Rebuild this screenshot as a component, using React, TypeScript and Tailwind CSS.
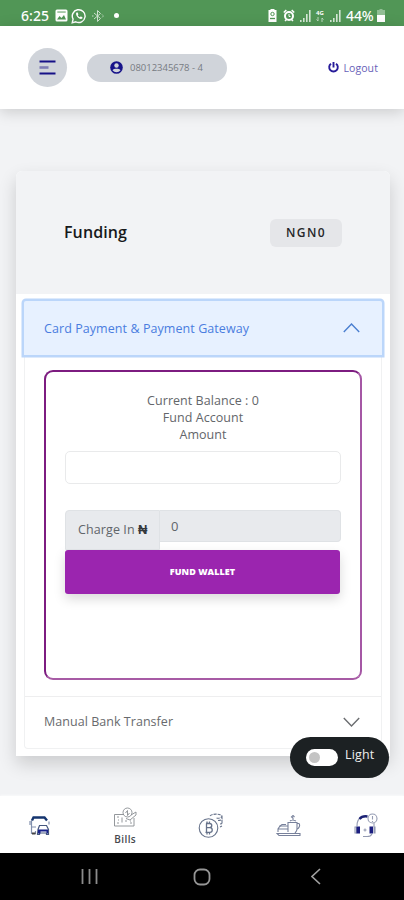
import React from "react";

function StatusBar() {
  return (
    <div className="flex h-[26px] items-center justify-between bg-[#519656] pl-[21px] pr-[19px] pt-[5px] text-white">
      <div className="flex items-center">
        <span className="w-[28px] whitespace-nowrap font-['Noto_Sans','Open_Sans',sans-serif] text-[14px] font-medium leading-none tracking-[0.1px]">6:25</span>
        <svg className="ml-[6px]" width="13" height="13" viewBox="0 0 13 13">
          <rect x="0.5" y="0.5" width="12" height="12" rx="1.5" fill="#fff" />
          <path d="M2 10.5 4.5 7 6.500 9 9 6 11 10.5Z" fill="#519656" />
          <rect x="2.3" y="2.3" width="8.4" height="1.5" fill="#8fbb92" />
        </svg>
        <svg className="ml-[3px]" width="16" height="16" viewBox="0 0 16 16">
          <path d="M1.2 14.8 2.1 11.2A6.4 6.4 0 1 1 4.8 13.8Z" fill="none" stroke="#fff" strokeWidth="1.4" />
          <path d="M5.5 4.5c-2 2.500 3.300 8.200 6 5.800l-.2-1.200-1.700-.7-.9.8C7.500 8.700 7 8 6.800 7.200l.6-.8-.7-1.900Z" fill="#fff" />
        </svg>
        <svg className="ml-[5px]" width="12" height="14" viewBox="0 0 12 14" fill="none" stroke="#cde1ce" strokeWidth="1">
          <path d="M2 4 8.5 9.5 5.5 12.5V1.5L8.5 4.5 2 10" />
          <path d="M0 7h2M10 5.5 11.5 7 10 8.5" strokeDasharray="1.5 1" />
        </svg>
        <span className="ml-[10px] h-[5px] w-[5px] rounded-full bg-white" />
      </div>
      <div className="flex items-center">
        <svg width="9" height="13" viewBox="0 0 9 13">
          <path d="M2.5 0h4v1H8.5v12h-8V1h2Z" fill="#fff" />
          <circle cx="4.5" cy="5" r="1.7" fill="none" stroke="#519656" />
          <path d="M2 9.5h5" stroke="#519656" strokeWidth="1.3" />
        </svg>
        <svg className="ml-[6px]" width="12" height="13" viewBox="0 0 12 13" fill="none" stroke="#fff">
          <circle cx="6" cy="7" r="4" strokeWidth="2" />
          <path d="M.8 3.5 3.3 1M11.2 3.5 8.7 1M2 12l1.5-1.5M10 12l-1.5-1.5" strokeWidth="1.5" />
          <path d="M6 5v2.5h1.5" />
        </svg>
        <Signal className="ml-[5px]" />
        <span className="ml-[4px] flex w-[10px] flex-col items-center font-['Noto_Sans',sans-serif] text-[6px] font-bold leading-[7px]">
          <span>4G</span>
          <svg width="8" height="5" viewBox="0 0 8 5" fill="none" stroke="#bcd8bd"><path d="M2 0v4L.5 2.5M6 5V1l1.5 1.5" /></svg>
        </span>
        <Signal className="ml-[5px]" />
        <span className="ml-[5px] w-[30px] whitespace-nowrap font-['Noto_Sans',sans-serif] text-[14px] font-medium leading-none tracking-[-0.1px]">44%</span>
        <svg className="ml-[1px]" width="8" height="13" viewBox="0 0 8 13">
          <path d="M2.5 0h3v1H8v6H0V1h2.5Z" fill="#91be94" />
          <path d="M0 6h8v7H0Z" fill="#fff" />
        </svg>
      </div>
    </div>
  );
}

function Signal({ className }: { className: string }) {
  return (
    <svg className={className} width="11" height="12" viewBox="0 0 11 12" fill="#d5e6d6">
      <path d="M0 10h1.600v2H0ZM3 8h1.600v4H3ZM6 4h1.600v8H6ZM9 0h1.600v12H9Z" />
    </svg>
  );
}

function Header() {
  return (
    <header className="relative flex h-[83px] items-center bg-white pl-[28px] pr-[26px] shadow-[0_3px_14px_rgba(0,0,0,0.17)]">
      <button className="flex h-[39px] w-[39px] items-center justify-center rounded-full bg-[#d0d4da]">
        <svg width="17" height="15" viewBox="0 0 17 15">
          <path d="M.5 1.5h16M.5 13.5h16" stroke="#161187" strokeWidth="2.200" />
          <path d="M.5 7.5h9" stroke="#7d7cb4" strokeWidth="2.6" />
        </svg>
      </button>
      <div className="ml-[20px] flex h-[28px] w-[140px] items-center rounded-full bg-[#d0d4da] pl-[23px]">
        <svg width="13" height="13" viewBox="0 0 13 13">
          <circle cx="6.5" cy="6.5" r="6.3" fill="#17138a" />
          <circle cx="6.5" cy="4.5" r="2.2" fill="#d0d4da" />
          <path d="M2.5 9.2C4 7.3 9 7.3 10.5 9.2 8.5 11.8 4.5 11.8 2.5 9.2Z" fill="#d0d4da" />
        </svg>
        <span className="relative top-px ml-[7px] whitespace-nowrap text-[9.5px] tracking-[-0.02px] text-[#777b82]">08012345678 - 4</span>
      </div>
      <div className="ml-auto flex items-center">
        <svg width="11" height="11" viewBox="0 0 11 11" fill="none" stroke="#271c9a" strokeWidth="1.9">
          <path d="M3 1.7a4.3 4.3 0 1 0 5 0M5.5 0v5.5" />
        </svg>
        <span className="relative top-px ml-[4px] whitespace-nowrap text-[10.5px] tracking-[0.1px] text-[#6861b8]">Logout</span>
      </div>
    </header>
  );
}

function Chevron({ up, color }: { up?: boolean; color: string }) {
  return (
    <svg width="17" height="10" viewBox="0 0 17 10" fill="none" stroke={color} strokeWidth="1.4">
      <path d={up ? "M.8 9 8.5 1l7.7 8" : "M.8 1 8.5 9l7.7-8"} />
    </svg>
  );
}

function FundingForm() {
  return (
    <div className="mx-[20px] mt-[14px] h-[310px] rounded-[9px] border-2 border-[#7d1c80] border-b-[#a75ba5] border-r-[#a557a5] px-[19px] pt-[20px]">
      <div className="text-center text-[12.5px] leading-[17px] tracking-[0.05px] text-[#63666a]">
        <p>Current Balance : 0</p>
        <p>Fund Account</p>
        <p>Amount</p>
      </div>
      <div className="mt-[8px] h-[33px] rounded-[5px] border border-[#e9eaeb] bg-white" />
      <div className="mt-[26px] flex h-[40px] items-start">
        <div className="flex h-[40px] w-[95px] items-center whitespace-nowrap rounded-tl-[4px] border border-[#dfe2e5] bg-[#e8eaed] pl-[12px] text-[12.5px] tracking-[0.1px] text-[#60656a]">
          Charge In&nbsp;<span className="font-['Liberation_Sans',sans-serif] text-[13px] font-bold text-[#34383b]">₦</span>
        </div>
        <div className="h-[32px] flex-1 rounded-r-[4px] border border-l-0 border-[#dfe2e5] bg-[#e8eaed] pl-[11px] text-[13px] leading-[30px] text-[#60656a]">0</div>
      </div>
      <button className="block h-[44px] w-[275px] rounded-[3px] bg-[#9b25af] text-center text-[9px] font-extrabold tracking-[0.05px] text-white shadow-[0_5px_12px_rgba(0,0,0,0.15)]">FUND WALLET</button>
    </div>
  );
}

function FundingCard() {
  return (
    <section className="ml-[16px] mr-[14px] h-[585px] rounded-t-[6px] bg-white shadow-[0_8px_18px_rgba(0,0,0,0.16)]">
      <div className="flex h-[123px] items-center justify-between rounded-t-[6px] bg-[#f2f3f5] px-[48px]">
        <h1 className="relative -top-px text-[16px] font-semibold tracking-[0.1px] text-[#17191b]">Funding</h1>
        <span className="flex h-[28px] w-[72px] items-center justify-center rounded-[6px] bg-[#e5e6e9] text-[12px] font-semibold tracking-[1.4px] text-[#25272a]">NGN0</span>
      </div>
      <div className="mx-[8px] mt-[7px] h-[448px] rounded-[4px] border border-t-0 border-[#f0f1f2]">
        <div className="-mx-px flex h-[54px] items-center justify-between rounded-t-[2px] bg-[#e7f1ff] pl-[20px] pr-[22px] shadow-[0_0_0_2.5px_#bbd6fa]">
          <span className="relative top-px whitespace-nowrap text-[12.5px] tracking-[0.07px] text-[#4a7de0]">Card Payment &amp; Payment Gateway</span>
          <Chevron up color="#4a7fd0" />
        </div>
        <div className="-mx-px pt-px"><FundingForm /></div>
        <div className="mt-[16px] flex h-[51px] items-center justify-between border-t border-[#eeeeef] pl-[19px] pr-[21px]">
          <span className="whitespace-nowrap text-[12.5px] tracking-[0.04px] text-[#686a6d]">Manual Bank Transfer</span>
          <Chevron color="#6b6d70" />
        </div>
      </div>
    </section>
  );
}

function ThemeSwitch() {
  return (
    <button className="absolute left-[290px] top-[628px] flex h-[41px] w-[99px] items-center rounded-full bg-[#1c2123] pl-[16px]">
      <span className="flex h-[17px] w-[32px] items-center rounded-full bg-white pl-[3px]">
        <span className="h-[11px] w-[11px] rounded-full bg-[#c4c4c4]" />
      </span>
      <span className="relative -top-[2px] ml-[7px] text-[12.5px] tracking-[0.15px] text-[#eeeeee]">Light</span>
    </button>
  );
}

function BottomNav() {
  return (
    <nav className="grid h-[57px] grid-cols-5 bg-white pt-px shadow-[0_-1px_2px_rgba(255,255,255,0.6)]">
      <div className="flex justify-center pt-[19px]">
        <svg width="22" height="20" viewBox="0 0 22 20" fill="none" stroke="#1d356b" strokeWidth="1.2">
          <path d="M3 4.5 4.5 1.5h11L18 4.5" strokeWidth="2.4" stroke="#15356f" />
          <path d="M2.5 4v13.5h4V15M3 11h4M1 5v4M20 5.5v3" stroke="#8290ad" />
          <path d="M9 13.5 10.5 9.5h7l2 4v5h-2V17h-7v1.5H8.5Z" stroke="#45577e" />
          <path d="M9 13.5h10v4h-1.5v-2h-6v2H9Z" fill="#18228a" stroke="none" />
          <path d="M3 17.5h3.5" strokeWidth="2" stroke="#444" />
        </svg>
      </div>
      <div className="flex flex-col items-center pl-[8px] pt-[10px]">
        <svg width="24" height="21" viewBox="0 0 24 21" fill="none" stroke="#888c91" strokeWidth=".9">
          <path d="M11 7.5H1.5v11.5H21V11M4 10h2M4 16h2M17 16h2" />
          <circle cx="14.5" cy="5.5" r="4.5" />
          <path d="m12.5 6 2-2.5v5l2-2.5M18 8l5-3v3L17 13l-4-1.5M9 10.5v5M13 13v2M5 13h1M17 14h1" />
        </svg>
        <span className="mt-[4px] text-[10px] font-semibold leading-[14px] tracking-[0.4px] text-[#45484d]">Bills</span>
      </div>
      <div className="flex justify-center pl-[19px] pt-[16px]">
        <svg width="26" height="25" viewBox="0 0 26 25" fill="none" stroke="#66728a" strokeWidth="1.1">
          <circle cx="10.5" cy="15" r="9.3" />
          <path d="M8 10.5h3.5c3 0 3 4.200 0 4.200H8h4c3 0 3 4.600 0 4.600H7.500M8.5 10.5v9M9 8.5v2M11.5 8.5v2M9 19.5v2M11.5 19.5v2" strokeWidth="1.3" />
          <path d="M12 3C14 .5 22 .5 24 3c0 2-4 2.5-6 2M24 3v8M20 7.5c2 0 4-.5 4-1.5M22 11c1 0 2-.3 2-1M22 14l2-1" strokeDasharray="3 1" />
        </svg>
      </div>
      <div className="flex justify-center pl-[13px] pt-[18px]">
        <svg width="26" height="22" viewBox="0 0 26 22" fill="none" stroke="#78819b" strokeWidth="1.1">
          <path d="M1 18.5h23v2H3Z" />
          <path d="M2 17v-3l2-3h8M2.5 14h10M12 17V7.5h9V14c0 2-1 3-2 4" />
          <path d="M21 8.5h2c1.5 2 0 5-2 5.5M17 5.5V3l-1.5-1L17 .5 18.5 2M14 6c1-1 4-1 6 0M3.5 11.5 6 9.5h4" />
        </svg>
      </div>
      <div className="flex justify-center pl-[5px] pt-[16px]">
        <svg width="24" height="25" viewBox="0 0 24 25" fill="none" stroke="#949bb2" strokeWidth="1.1">
          <path d="M3 13c0-5 2-8 5-9" />
          <path d="M5.5 6C7.5 3.5 10 3 13.5 3.5" stroke="#1b2174" strokeWidth="2.5" />
          <circle cx="18.5" cy="5.5" r="4.5" />
          <path d="M18.5 3v3.5M18.5 8v1M20 10v4" />
          <path d="M1 14h1.5v6H1ZM20 14h1v6h-1Z" />
          <path d="M2.5 13.5H6v7H2.5ZM15.5 13.5H19v7h-3.5Z" fill="#1b1e80" stroke="none" />
          <path d="M18 21c-1 2-3 2.8-6 2.5H9M9.5 17h3M11 15.5v3" />
        </svg>
      </div>
    </nav>
  );
}

function SystemBar() {
  return (
    <div className="flex h-[47px] items-center bg-black pl-[81px]">
      <svg width="17" height="17" viewBox="0 0 17 17" stroke="#8c8c8c" strokeWidth="1.8"><path d="M1.5 1v15M8.5 1v15M15.5 1v15" /></svg>
      <svg className="ml-[95px]" width="18" height="18" viewBox="0 0 18 18" fill="none" stroke="#969696" strokeWidth="1.8"><rect x="1.5" y="1.5" width="15" height="15" rx="5.5" /></svg>
      <svg className="ml-[100px]" width="10" height="17" viewBox="0 0 10 17" fill="none" stroke="#a0a0a0" strokeWidth="1.6"><path d="M9 1 1 8.5 9 16" /></svg>
    </div>
  );
}

export default function App() {
  return (
    <div className="h-[900px] w-[404px] overflow-hidden bg-[#f2f3f5] font-['Open_Sans','Noto_Sans',sans-serif]">
      <StatusBar />
      <Header />
      <main className="relative h-[687px] pt-[62px]">
        <FundingCard />
        <ThemeSwitch />
      </main>
      <BottomNav />
      <SystemBar />
    </div>
  );
}
